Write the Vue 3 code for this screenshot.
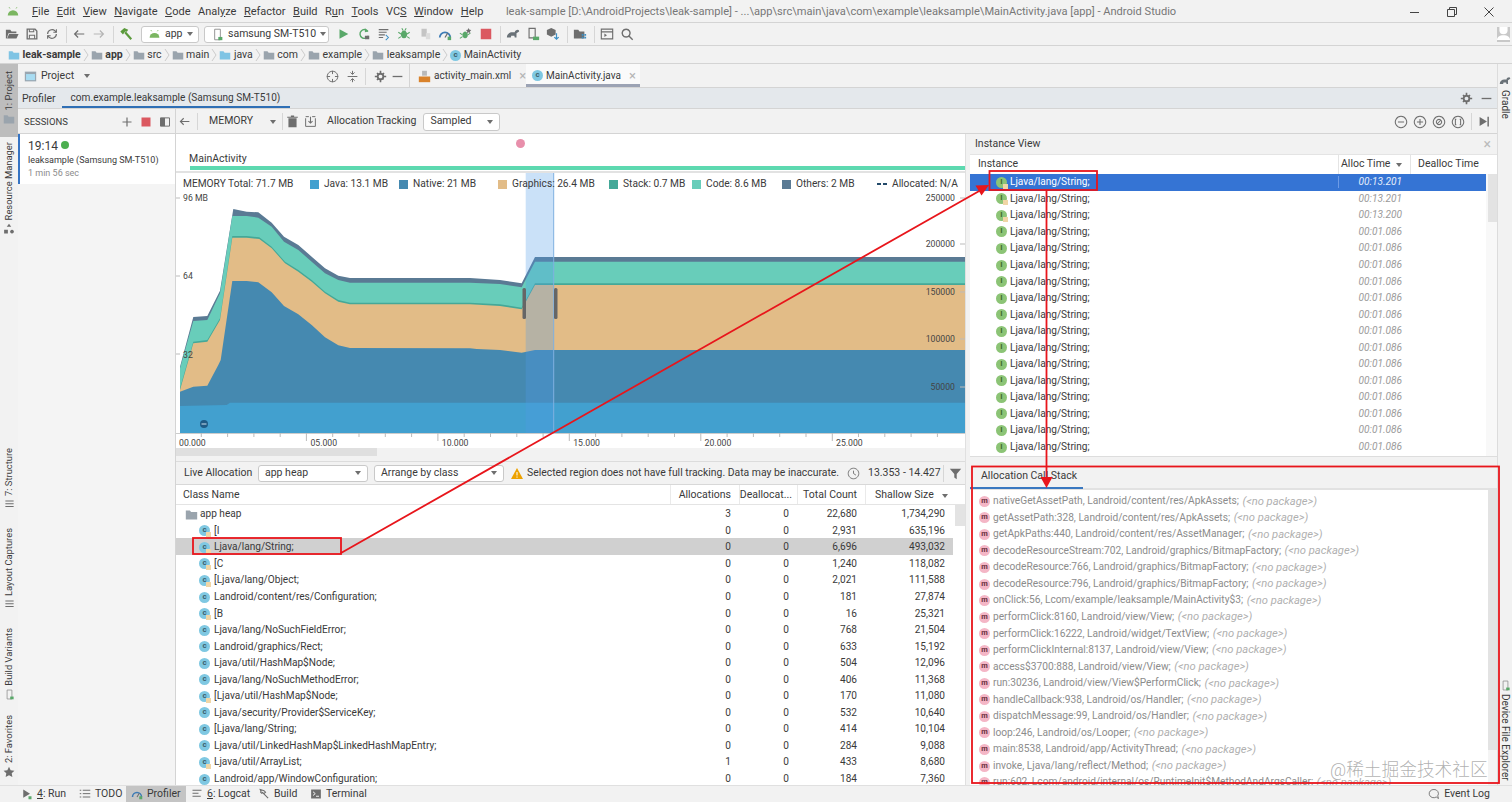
<template>
  <div class="ide">
    <!-- menu -->
    <div class="menu-bar">
      <Icon name="android" class="logo" />
      <span v-for="m in menus" :key="m.t" class="menu-item">{{ m.a }}<u>{{ m.u }}</u>{{ m.b }}</span>
      <span class="title">leak-sample [D:\AndroidProjects\leak-sample] - ...\app\src\main\java\com\example\leaksample\MainActivity.java [app] - Android Studio</span>
      <div class="win-btns">
        <svg width="12" height="12" viewBox="0 0 12 12"><path d="M1 6.5h9" stroke="#444" fill="none" /></svg>
        <svg width="12" height="12" viewBox="0 0 12 12"><path d="M1.5 3.5h7v7h-7zM3.5 3.5v-2h7v7h-2" stroke="#444" fill="none" /></svg>
        <svg width="12" height="12" viewBox="0 0 12 12"><path d="M1.5 1.5l9 9M10.5 1.5l-9 9" stroke="#444" fill="none" /></svg>
      </div>
    </div>

    <!-- toolbar -->
    <div class="tool-bar">
      <div v-for="n in ['folderOpen', 'save', 'sync']" :key="n" class="tb"><Icon :name="n" /></div>
      <i class="sep"></i>
      <div class="tb"><Icon name="back" /></div>
      <div class="tb"><Icon name="forward" /></div>
      <i class="sep"></i>
      <div class="tb"><Icon name="hammer" /></div>
      <div class="combo app-combo"><Icon name="android" :size="13" />app<b class="caret"></b></div>
      <div class="combo device-combo"><Icon name="device" :size="13" />samsung SM-T510<b class="caret"></b></div>
      <div v-for="n in runIcons" :key="n" class="tb run"><Icon :name="n" /></div>
      <i class="sep"></i>
      <div v-for="n in ['gradle', 'deviceSync', 'box']" :key="n" class="tb"><Icon :name="n" /></div>
      <i class="sep"></i>
      <div class="tb"><Icon name="folderGrid" /></div>
      <i class="sep"></i>
      <div class="tb"><Icon name="terminal" /></div>
      <div class="tb"><Icon name="search" /></div>
      <div class="avatar"><Icon name="user" :size="13" /></div>
    </div>

    <!-- breadcrumbs -->
    <div class="crumbs">
      <template v-for="(c, i) in crumbs" :key="c.t">
        <span class="crumb" :class="{ bold: c.bold }">
          <span v-if="c.cls" class="badge cls">c</span>
          <Icon v-else :name="c.blue ? 'folderBlue' : 'folder'" :size="12" />
          {{ c.t }}
        </span>
        <svg v-if="i < crumbs.length - 1" class="chev" width="6" height="14" viewBox="0 0 6 14"><path d="M1 1l4 6-4 6" fill="none" stroke="#ccc" /></svg>
      </template>
    </div>

    <div class="workspace">
      <!-- left stripe -->
      <div class="stripe left-stripe">
        <div class="stripe-btn active project-btn"><span>1: Project</span><Icon name="folder" :size="12" /></div>
        <div class="stripe-btn res-btn"><span>Resource Manager</span><Icon name="shapes" :size="12" /></div>
        <div class="stripe-btn structure-btn"><span>7: Structure</span><Icon name="list" :size="11" /></div>
        <div class="stripe-btn captures-btn"><span>Layout Captures</span><Icon name="list" :size="11" /></div>
        <div class="stripe-btn variants-btn"><span>Build Variants</span><Icon name="device" :size="11" /></div>
        <div class="stripe-btn fav-btn"><span>2: Favorites</span><Icon name="star" :size="12" /></div>
      </div>

      <div class="center">
        <!-- project + editor tabs -->
        <div class="tabs-row">
          <div class="project-head">
            <Icon name="window" :size="13" />
            <span>Project</span><b class="caret"></b>
            <span class="grow"></span>
            <Icon name="target" :size="13" />
            <Icon name="collapse" :size="13" class="collapse-ic" />
            <i class="sep"></i>
            <Icon name="gear" :size="13" />
            <Icon name="minus" :size="13" />
          </div>
          <div class="editor-tab">
            <Icon name="xml" :size="13" />
            <span>activity_main.xml</span><em>×</em>
          </div>
          <div class="editor-tab current">
            <span class="badge cls">c</span>
            <span>MainActivity.java</span><em>×</em>
          </div>
        </div>

        <!-- profiler tabs -->
        <div class="profiler-tabs">
          <span class="pt-label">Profiler</span>
          <span class="pt-tab">com.example.leaksample (Samsung SM-T510)</span>
          <span class="grow"></span>
          <Icon name="gear" :size="13" />
          <Icon name="minus" :size="13" />
        </div>

        <!-- profiler toolbar -->
        <div class="profiler-bar">
          <div class="sessions-head">
            <span class="sessions-label">SESSIONS</span>
            <span class="grow"></span>
            <Icon name="plus" :size="12" />
            <Icon name="stop" :size="12" />
            <Icon name="panel" :size="12" />
          </div>
          <div class="memory-bar">
            <Icon name="back" :size="13" />
            <i class="sep"></i>
            <span class="memory-label">MEMORY</span><b class="caret"></b>
            <i class="sep"></i>
            <Icon name="trash" :size="13" class="trash-ic" />
            <Icon name="capture" :size="13" />
            <span class="track-label">Allocation Tracking</span>
            <div class="combo sampled">Sampled<b class="caret"></b></div>
            <span class="grow"></span>
            <Icon name="zoomOut" :size="14" />
            <Icon name="zoomIn" :size="14" />
            <Icon name="zoomReset" :size="14" />
            <Icon name="zoomFit" :size="14" />
            <i class="sep"></i>
            <Icon name="toEnd" :size="13" />
          </div>
        </div>

        <div class="profiler-body">
          <!-- sessions -->
          <div class="sessions">
            <div class="session-card">
              <div class="session-time">19:14 <i class="live-dot"></i></div>
              <div>leaksample (Samsung SM-T510)</div>
              <div class="session-dur">1 min 56 sec</div>
            </div>
          </div>

          <!-- timeline + class table -->
          <div class="left-panel">
            <div class="event-strip">
              <i class="event-dot"></i>
              <span class="activity-name">MainActivity</span>
              <i class="activity-bar"></i>
            </div>
            <div class="chart">
              <svg class="chart-svg" width="790" height="275" viewBox="176 173 790 275">
                <path v-for="a in areas" :key="a.c" :d="a.d" :fill="a.c" />
                <rect x="525.7" y="173" width="28" height="260" fill="#4f9be8" fill-opacity=".3" />
                <path d="M553.7 173v260" stroke="#7fb0e0" />
                <rect x="522.5" y="288" width="3.5" height="31" rx="1.5" fill="#666" />
                <rect x="554" y="288" width="3.5" height="31" rx="1.5" fill="#666" />
                <circle cx="204" cy="424" r="4" fill="#1f5b85" />
                <path d="M201.5 424h5" stroke="#cfe3f0" />
                <path d="M176 433.5h789" stroke="#ccc" />
                <path v-for="t in ticks" :key="t.x" :d="`M${t.x} 433v${t.h}`" stroke="#bbb" />
                <text v-for="l in timeLabels" :key="l.t" :x="l.x" y="446" class="axis">{{ l.t }}</text>
                <text x="183" y="201" class="axis">96 MB</text>
                <text x="183" y="279" class="axis">64</text>
                <text x="183" y="358" class="axis">32</text>
                <path d="M176 198h4M176 276h4M176 354h4" stroke="#bbb" />
                <template v-for="r in rightAxis" :key="r.t">
                  <text x="955" :y="r.y + 3" class="axis end">{{ r.t }}</text>
                  <path :d="`M960 ${r.y}h5`" stroke="#bbb" />
                </template>
              </svg>
              <div class="legend">
                <span class="legend-total">MEMORY Total: 71.7 MB</span>
                <span v-for="l in legend" :key="l.t" class="legend-item" :style="{ width: l.w + 'px' }">
                  <i class="swatch" :style="{ background: l.c }"></i>{{ l.t }}
                </span>
                <span class="legend-item"><i class="dash"></i>Allocated: N/A</span>
              </div>
            </div>
            <div class="h-scroll"><i></i></div>

            <div class="alloc-bar">
              <span class="live-label">Live Allocation</span>
              <div class="combo heap">app heap<b class="caret"></b></div>
              <div class="combo arrange">Arrange by class<b class="caret"></b></div>
              <svg class="warn" width="12" height="11" viewBox="0 0 12 11"><path d="M6 0l6 11H0z" fill="#EDA200" /><path d="M6 4v3.5M6 8.5v1.2" stroke="#fff" /></svg>
              <span class="warn-text">Selected region does not have full tracking. Data may be inaccurate.</span>
              <Icon name="clock" :size="13" />
              <span class="range">13.353 - 14.427</span>
              <i class="sep"></i>
              <Icon name="filter" :size="13" />
            </div>

            <div class="alloc-head">
              <span class="col-name">Class Name</span>
              <span class="num">Allocations</span>
              <span class="num dealloc">Deallocat...</span>
              <span class="num">Total Count</span>
              <span class="num sorted">Shallow Size<b class="caret"></b></span>
            </div>
            <div class="alloc-wrap">
              <div class="alloc-rows">
                <div v-for="(r, i) in classes" :key="i" class="alloc-row" :class="{ picked: i === 2 }">
                  <span class="class-cell" :class="{ root: i === 0 }">
                    <Icon v-if="i === 0" name="folder" :size="13" />
                    <span v-else class="badge cls">c<i v-if="r[5]" class="lock"></i></span>
                    {{ r[0] }}
                  </span>
                  <span class="val">{{ r[1] }}</span>
                  <span class="val">{{ r[2] }}</span>
                  <span class="val">{{ r[3] }}</span>
                  <span class="val">{{ r[4] }}</span>
                </div>
              </div>
              <div class="v-track"><i class="thumb-a"></i></div>
            </div>
          </div>

          <!-- instance view + call stack -->
          <div class="right-panel">
            <div class="instance-title"><span>Instance View</span><em>×</em></div>
            <div class="instance-head">
              <span>Instance</span>
              <span class="it-col">Alloc Time<b class="caret"></b></span>
              <span class="it-col last">Dealloc Time</span>
            </div>
            <div class="instance-wrap">
              <div class="instance-rows">
                <div v-for="(t, i) in instanceTimes" :key="i" class="instance-row" :class="{ picked: i === 0 }">
                  <span class="inst-name">
                    <span class="badge inst">I<i v-if="i < 3" class="lock"></i></span>Ljava/lang/String;
                  </span>
                  <span class="inst-time">{{ t }}</span>
                  <span></span>
                </div>
              </div>
              <div class="v-track inst-track"><i class="thumb-b"></i></div>
            </div>
            <div class="pane-gap"></div>
            <div class="stack-tabs"><span>Allocation Call Stack</span></div>
            <div class="stack-wrap">
              <div class="stack-rows">
                <div v-for="s in stack" :key="s" class="stack-row">
                  <span class="badge mth">m</span>{{ s }} <em>(&lt;no package&gt;)</em>
                </div>
              </div>
              <div class="v-track stack-track"><i class="thumb-c"></i></div>
            </div>
          </div>
        </div>
      </div>

      <!-- right stripe -->
      <div class="stripe right-stripe">
        <div class="stripe-btn gradle-btn"><Icon name="gradle" :size="12" /><span>Gradle</span></div>
        <span class="grow"></span>
        <div class="stripe-btn files-btn"><Icon name="device" :size="11" /><span>Device File Explorer</span></div>
      </div>
    </div>

    <!-- status bar -->
    <div class="status-bar">
      <div v-for="b in bottomTabs" :key="b.t" class="bottom-tab" :class="{ active: b.active }" :style="{ width: b.w + 'px' }">
        <Icon :name="b.i" :size="12" /><span><u v-if="b.n">{{ b.n }}</u>{{ b.t }}</span>
      </div>
      <span class="grow"></span>
      <div class="bottom-tab event-log"><Icon name="bubble" :size="12" /><span>Event Log</span></div>
    </div>

    <!-- red annotations drawn on the screenshot -->
    <svg class="marks" width="1512" height="802" viewBox="0 0 1512 802">
      <rect x="193" y="538" width="148" height="16" />
      <rect x="989.5" y="171" width="107.5" height="19" />
      <rect x="972" y="466.5" width="527" height="316.5" />
      <path d="M341 553L981 190M1046.5 190V480" />
      <path class="head" d="M989 185L981.5 195.5L975.5 185.5z" />
      <path class="head" d="M1046.5 488L1040.5 477H1052.5z" />
    </svg>
    <div class="watermark">@稀土掘金技术社区</div>
  </div>
</template>

<script setup>
import { h } from 'vue'

const G = '#6E6E6E'
const GREEN = '#59A869'
const BLUE = '#3D8FC4'

// [path, colour, strokeWidth] - no stroke width means filled
const icons = {
  android: [['M2 12a6 6 0 0 1 12 0z', '#7BB661'], ['M4.5 4L3.5 2.5M11.5 4l1-1.5', '#7BB661', 1]],
  folderOpen: [['M1 3h5l1.5 2H13v2H4L2 13H1z', G], ['M4.7 8H15.5l-2.4 5H2.3z', G]],
  save: [['M2.5 2.5h9l2 2v9h-11z', G, 1.5], ['M5 2.5v3h5v-3M5 13.5V9.5h6v4', G, 1.2]],
  sync: [['M3 8a5 5 0 0 1 8.5-3.5L13 6M13 8a5 5 0 0 1-8.5 3.5L3 10', G, 1.4], ['M13 2.5V6H9.5M3 13.5V10h3.5', G, 1.2]],
  back: [['M14 8H3M7 4L3 8l4 4', G, 1.4]],
  forward: [['M2 8h11M9 4l4 4-4 4', '#B5B5B5', 1.4]],
  hammer: [['M1.500 5L6 1l4.500 2-1.500 2.500-2-.5L4.500 8.500z', '#5B9A3C'], ['M7 6l7 8', '#5B9A3C', 2.400]],
  device: [['M4.5 1.5h7v13h-7z', '#8a8a8a', 1.1], ['M9 11h5v4H9z', GREEN]],
  run: [['M4 2.5l10 5.5-10 5.5z', GREEN]],
  apply: [['M12.5 5a5 5 0 1 0 .5 5', GREEN, 1.6], ['M9 1l4 4-4 1z', GREEN], ['M9 10h5v4H9z', G]],
  lines: [['M2 3h11M2 6h9M2 9h7M2 12h5', G, 1.3], ['M10 9l3 3-3 3', BLUE, 1.2]],
  bug: [['M8 4a3.5 4.5 0 1 0 .01 0z', GREEN], ['M1.5 6l3 2M14.5 6l-3 2M1.5 13l3-2M14.5 13l-3-2M5.5 1.5L7 4M10.5 1.5L9 4', GREEN, 1.2]],
  attach: [['M4 2h6v9H4z', '#c4c4c4'], ['M9 7h5v7H9z', '#dcdcdc']],
  gauge: [['M2 12a6 6 0 0 1 12 0', '#3D7BB5', 2], ['M8 12l3-5', G, 1.4], ['M11 11h4v4h-4z', GREEN]],
  bug2: [['M7 5a3 4 0 1 0 .01 0z', GREEN], ['M1 7l3 2M13 7l-3 2M1 13l3-2', GREEN, 1.2], ['M11 1l1 2 2 .5-1.5 1.5.5 2-2-1-2 1 .5-2L8 3.5l2-.5z', G]],
  stop: [['M2 2h12v12H2z', '#DB5860']],
  gradle: [['M1 12c0-4 3-6 6-6h3c0-2 2-3 3.5-3 1 0 1.500 1 1.500 2l-3 2v5h-2l-.5-2H6l-.5 2H3z', '#6a7278']],
  deviceSync: [['M3.500 1.500h7v11h-7z', G, 1.300], ['M8 11h7v4H8z', GREEN]],
  box: [['M6 1l5 2.500v5L6 11 1 8.500v-5z', G], ['M12 7v7M9.500 11.500L12 14l2.500-2.500', BLUE, 1.400]],
  folderGrid: [['M1 3h5l1.500 2H13v8H1z', G], ['M10 8h2v2h-2zM13 8h2v2h-2zM10 11h2v2h-2zM13 11h2v2h-2z', BLUE]],
  terminal: [['M1.500 2.500h13v11h-13zM1.500 5.500h13', G, 1.300], ['M5 7.500l3 2-3 2z', G]],
  search: [['M7 2.500a4.500 4.500 0 1 0 .01 0zM10.500 10.500l4 4', G, 1.600]],
  user: [['M3 0h10v4a5 5 0 0 1-10 0z', '#fff'], ['M0 16c0-4 3-6 8-6s8 2 8 6z', '#fff']],
  folder: [['M1 3h5l1.500 2H15v9H1z', '#9aa4ad']],
  folderBlue: [['M1 3h5l1.500 2H15v9H1z', '#7fc4e4']],
  shapes: [['M8 1l3 4H5zM1.500 9h5v5h-5z', G], ['M12 9a2.500 2.500 0 1 0 .01 0z', G]],
  list: [['M2 3h12M2 7h12M2 11h12', G, 1.500]],
  star: [['M8 1l2.200 4.600 5 .7-3.600 3.500.9 5L8 12.400 3.500 14.800l.9-5L.8 6.300l5-.7z', G]],
  window: [['M1 2h14v12H1z', '#9aa6b0'], ['M2.500 5h11v7.500h-11z', '#a8dcf2']],
  target: [['M8 1.500a6.500 6.500 0 1 0 .01 0zM8 1v4M8 11v4M1 8h4M11 8h4', G, 1.200]],
  collapse: [['M2 8h12M8 1v4M5.500 3L8 5.500 10.500 3M8 15v-4M5.500 13L8 10.500l2.500 2.500', G, 1.200]],
  gear: [['M8 4.500a3.500 3.500 0 1 0 .01 0z', G, 2.400], ['M7 1h2v3H7zM7 12h2v3H7zM1 7h3v2H1zM12 7h3v2h-3zM3 4.400L4.400 3l2 2L5 6.400zM11 9.600L12.400 11 11 12.400l-1.400-2zM3 11.600L5 9.600 6.400 11l-2 2zM9.600 5l2-2L13 4.400l-2 2z', G]],
  minus: [['M2 8h12', G, 1.600]],
  xml: [['M5 1h6v6H5z', '#b9b9b9'], ['M1 8h14v7H1z', '#D9822B']],
  plus: [['M8 2v12M2 8h12', G, 1.600]],
  panel: [['M2 2.500h12v11H2z', G, 1.300], ['M2 2.500h6v11H2z', G]],
  trash: [['M3 4h10v11H3zM1.500 2h13v1.500h-13zM6 .5h4V2H6z', G]],
  capture: [['M2 4v10h12V4M6 2H2M14 2h-4', G, 1.200], ['M8 2v8M5.500 7.500L8 10l2.500-2.500', G, 1.300]],
  zoomOut: [['M8 1.500a6.500 6.500 0 1 0 .01 0zM4.500 8h7', G, 1.200]],
  zoomIn: [['M8 1.500a6.500 6.500 0 1 0 .01 0zM4.500 8h7M8 4.500v7', G, 1.200]],
  zoomReset: [['M8 1.500a6.500 6.500 0 1 0 .01 0zM8 5a3 3 0 1 0 .01 0zM6 10l4-4', G, 1.200]],
  zoomFit: [['M8 1.500a6.500 6.500 0 1 0 .01 0zM6 5H5v6h1M10 5h1v6h-1', G, 1.200]],
  toEnd: [['M2 2.500l9 5.500-9 5.500z', G], ['M12.500 2v12', G, 1.800]],
  clock: [['M8 1.500a6.500 6.500 0 1 0 .01 0zM8 4.500V8l3 2', G, 1.100]],
  filter: [['M1 2h14L9.500 8.500V15l-3-2V8.500z', G]],
  runBtn: [['M3 2l9 5.500L3 13z', G], ['M10 11h4v4h-4z', GREEN]],
  todo: [['M1 3h2M1 7.500h2M1 12h2M5 3h10M5 7.500h10M5 12h10', G, 1.300]],
  logcat: [['M2 3h12M2 7h8M2 11h11', G, 1.500]],
  tool: [['M3 2l5 1.500 2 2-2 2-2-1.500-1 1-1.500-1.500.5-1zM6.500 6.500l7 7', G, 1.500]],
  term: [['M1.500 2h13v12h-13z', G], ['M4 5l3 2.500L4 10M8 11h4', '#fff', 1.200]],
  bubble: [['M8 2a6 5.500 0 1 0 3 10l3 2-1-3.500A5.500 5.500 0 0 0 8 2z', G, 1.200]]
}

const Icon = (props) => h('svg', {
  class: 'ic',
  width: props.size || 14,
  height: props.size || 14,
  viewBox: '0 0 16 16'
}, icons[props.name].map(([d, c, w]) => h('path', w ? { d, fill: 'none', stroke: c, 'stroke-width': w } : { d, fill: c })))
Icon.props = ['name', 'size']

const menus = [
  { t: 'File', a: '', u: 'F', b: 'ile' }, { t: 'Edit', a: '', u: 'E', b: 'dit' },
  { t: 'View', a: '', u: 'V', b: 'iew' }, { t: 'Navigate', a: '', u: 'N', b: 'avigate' },
  { t: 'Code', a: '', u: 'C', b: 'ode' }, { t: 'Analyze', a: 'Anal', u: 'y', b: 'ze' },
  { t: 'Refactor', a: '', u: 'R', b: 'efactor' }, { t: 'Build', a: '', u: 'B', b: 'uild' },
  { t: 'Run', a: 'R', u: 'u', b: 'n' }, { t: 'Tools', a: '', u: 'T', b: 'ools' },
  { t: 'VCS', a: 'VC', u: 'S', b: '' }, { t: 'Window', a: '', u: 'W', b: 'indow' },
  { t: 'Help', a: '', u: 'H', b: 'elp' }
]
const runIcons = ['run', 'apply', 'lines', 'bug', 'attach', 'gauge', 'bug2', 'stop']

const crumbs = [
  { t: 'leak-sample', bold: true, blue: true }, { t: 'app', bold: true }, { t: 'src' }, { t: 'main' },
  { t: 'java', blue: true }, { t: 'com' }, { t: 'example' }, { t: 'leaksample' }, { t: 'MainActivity', cls: true }
]

const bottomTabs = [
  { t: ': Run', n: '4', i: 'runBtn', w: 58 }, { t: 'TODO', i: 'todo', w: 52 },
  { t: 'Profiler', i: 'gauge', active: true, w: 60 }, { t: ': Logcat', n: '6', i: 'logcat', w: 67 },
  { t: 'Build', i: 'tool', w: 52 }, { t: 'Terminal', i: 'term', w: 70 }
]

// chart series, traced in 3x coordinates of the x=170 y=130 crop
const END = 2385
const others = [[30, 710], [70, 561], [112, 558], [150, 482], [190, 237], [230, 245], [265, 247], [305, 278], [342, 320], [385, 345], [425, 380], [465, 415], [505, 437], [540, 444], [900, 444], [990, 450], [1055, 460], [1095, 381], [END, 381]]
const code = [[30, 715], [70, 573], [112, 570], [150, 490], [187, 258], [230, 258], [265, 263], [305, 290], [342, 335], [385, 360], [425, 395], [465, 430], [505, 450], [540, 458], [900, 458], [990, 462], [1055, 472], [1095, 395], [END, 395]]
const graphics = [[30, 780], [70, 640], [112, 635], [150, 570], [187, 323], [230, 323], [268, 327], [305, 355], [345, 400], [385, 425], [425, 455], [465, 490], [505, 515], [540, 523], [900, 523], [990, 528], [1055, 538], [1095, 465], [END, 465]]
const stackTop = graphics.map(([x, y]) => [x, y - 5])
const native = [[30, 785], [70, 770], [112, 767], [145, 705], [152, 690], [187, 453], [230, 453], [265, 457], [305, 487], [342, 528], [385, 553], [425, 585], [465, 622], [505, 646], [540, 654], [900, 655], [920, 657], [990, 660], [1055, 668], [1095, 660], [END, 660]]
const java = [[30, 828], [170, 825], [180, 818], [END, 818]]

const toArea = (pts) => {
  const line = pts.map(([x, y]) => `${(170 + x / 3).toFixed(1)} ${(130 + y / 3).toFixed(1)}`).join('L')
  return `M180 433L${line}L965 433z`
}
const areas = [
  { c: '#5A7A94', d: toArea(others) },
  { c: '#68CDBA', d: toArea(code) },
  { c: '#44A898', d: toArea(stackTop) },
  { c: '#E2BC87', d: toArea(graphics) },
  { c: '#4589B0', d: toArea(native) },
  { c: '#42A0CF', d: toArea(java) }
]

const ticks = Array.from({ length: 30 }, (_, i) => ({
  x: +(175 + 26.29 * i).toFixed(1),
  h: i % 5 === 0 ? 8 : 4
})).filter((t) => t.x > 178 && t.x < 965)
const timeLabels = ['00.000', '05.000', '10.000', '15.000', '20.000', '25.000'].map((t, i) => ({ t, x: 179 + 131.4 * i }))
const rightAxis = [
  { t: '250000', y: 198 }, { t: '200000', y: 244 }, { t: '150000', y: 292 },
  { t: '100000', y: 339 }, { t: '50000', y: 387 }
]
const legend = [
  { t: 'Java: 13.1 MB', c: '#42A0CF', w: 89 }, { t: 'Native: 21 MB', c: '#4589B0', w: 99 },
  { t: 'Graphics: 26.4 MB', c: '#E2BC87', w: 111 }, { t: 'Stack: 0.7 MB', c: '#44A898', w: 83 },
  { t: 'Code: 8.6 MB', c: '#68CDBA', w: 90 }, { t: 'Others: 2 MB', c: '#5A7A94', w: 95 }
]

const classes = [
  ['app heap', '3', '0', '22,680', '1,734,290'],
  ['[I', '0', '0', '2,931', '635,196', 1],
  ['Ljava/lang/String;', '0', '0', '6,696', '493,032', 1],
  ['[C', '0', '0', '1,240', '118,082', 1],
  ['[Ljava/lang/Object;', '0', '0', '2,021', '111,588', 1],
  ['Landroid/content/res/Configuration;', '0', '0', '181', '27,874'],
  ['[B', '0', '0', '16', '25,321', 1],
  ['Ljava/lang/NoSuchFieldError;', '0', '0', '768', '21,504'],
  ['Landroid/graphics/Rect;', '0', '0', '633', '15,192'],
  ['Ljava/util/HashMap$Node;', '0', '0', '504', '12,096'],
  ['Ljava/lang/NoSuchMethodError;', '0', '0', '406', '11,368'],
  ['[Ljava/util/HashMap$Node;', '0', '0', '170', '11,080', 1],
  ['Ljava/security/Provider$ServiceKey;', '0', '0', '532', '10,640'],
  ['[Ljava/lang/String;', '0', '0', '414', '10,104'],
  ['Ljava/util/LinkedHashMap$LinkedHashMapEntry;', '0', '0', '284', '9,088'],
  ['Ljava/util/ArrayList;', '1', '0', '433', '8,680', 1],
  ['Landroid/app/WindowConfiguration;', '0', '0', '184', '7,360']
]

const instanceTimes = ['00:13.201', '00:13.201', '00:13.200', ...Array(14).fill('00:01.086')]

const stack = [
  'nativeGetAssetPath, Landroid/content/res/ApkAssets;',
  'getAssetPath:328, Landroid/content/res/ApkAssets;',
  'getApkPaths:440, Landroid/content/res/AssetManager;',
  'decodeResourceStream:702, Landroid/graphics/BitmapFactory;',
  'decodeResource:766, Landroid/graphics/BitmapFactory;',
  'decodeResource:796, Landroid/graphics/BitmapFactory;',
  'onClick:56, Lcom/example/leaksample/MainActivity$3;',
  'performClick:8160, Landroid/view/View;',
  'performClick:16222, Landroid/widget/TextView;',
  'performClickInternal:8137, Landroid/view/View;',
  'access$3700:888, Landroid/view/View;',
  'run:30236, Landroid/view/View$PerformClick;',
  'handleCallback:938, Landroid/os/Handler;',
  'dispatchMessage:99, Landroid/os/Handler;',
  'loop:246, Landroid/os/Looper;',
  'main:8538, Landroid/app/ActivityThread;',
  'invoke, Ljava/lang/reflect/Method;',
  'run:602, Lcom/android/internal/os/RuntimeInit$MethodAndArgsCaller;'
]
</script>

<style scoped>
.ide {
  position: relative;
  width: 1512px;
  height: 802px;
  overflow: hidden;
  display: flex;
  flex-direction: column;
  background: #f2f2f2;
  color: #3a3a3a;
  font: 10.5px/1.2 Roboto, "Noto Sans CJK SC", sans-serif;
}
.ic { display: block; flex: none; }
.grow { flex: 1; }
em { font-style: normal; }
.sep {
  display: block;
  flex: none;
  width: 1px;
  height: 17px;
  margin: 0 6px;
  background: #d6d6d6;
}

.menu-bar {
  flex: none;
  height: 23px;
  display: flex;
  align-items: center;
  border-bottom: 1px solid #d4d4d4;
  box-sizing: border-box;
  padding: 1px 0 0 6px;
}
.logo { margin-right: 12px; }
.menu-item { margin-right: 7.5px; font-size: 11px; }
.title { margin-left: 15px; color: #777; font-size: 11.1px; white-space: nowrap; }
.win-btns {
  margin-left: auto;
  display: flex;
  gap: 25px;
  padding-right: 17px;
}

.tool-bar {
  flex: none;
  height: 23px;
  display: flex;
  align-items: center;
  border-bottom: 1px solid #d4d4d4;
  box-sizing: border-box;
  padding-left: 2px;
}
.tool-bar .sep { margin: 0 2px 0 4px; }
.tb { width: 20px; display: flex; justify-content: center; flex: none; }
.tb.run { width: 20.4px; }
.combo {
  flex: none;
  box-sizing: border-box;
  height: 17px;
  display: flex;
  align-items: center;
  gap: 4px;
  padding: 0 6px;
  background: #fff;
  border: 1px solid #c9c9c9;
  border-radius: 3px;
  font-size: 10.5px;
  white-space: nowrap;
}
.caret {
  flex: none;
  width: 0;
  height: 0;
  margin-left: auto;
  border: 3.5px solid transparent;
  border-top: 4px solid #6e6e6e;
  border-bottom: 0;
}
.app-combo { width: 58px; margin: 0 5px 0 5px; }
.device-combo { width: 125px; margin-right: 4px; }
.avatar {
  margin-left: auto;
  margin-right: 2px;
  width: 13px;
  height: 15px;
  background: #c8c8c8;
}

.crumbs {
  flex: none;
  height: 18px;
  display: flex;
  align-items: center;
  gap: 2px;
  padding: 1px 0 0 8px;
  border-bottom: 1px solid #d4d4d4;
  box-sizing: border-box;
}
.crumb { display: flex; align-items: center; gap: 2.5px; }
.crumb.bold { font-weight: 700; }
.chev { flex: none; }

.badge {
  position: relative;
  flex: none;
  display: inline-block;
  box-sizing: border-box;
  width: 11px;
  height: 11px;
  border-radius: 50%;
  text-align: center;
  font-size: 8px;
  line-height: 10px;
  font-weight: 700;
  color: #3c5f6c;
}
.badge.cls { background: #7fc8e2; }
.badge.inst { background: #8cc476; color: #3f6a2c; }
.badge.mth { background: #f4b6c6; color: #6a2f3c; margin-right: 3px; font-size: 7.5px; }
.lock {
  position: absolute;
  right: -1px;
  bottom: -1px;
  width: 5px;
  height: 5px;
  background: #f0d6a6;
}

.workspace { flex: 1; min-height: 0; display: flex; }
.stripe { flex: none; display: flex; flex-direction: column; overflow: hidden; }
.left-stripe { width: 18px; font-size: 9.4px; }
.right-stripe { width: 15px; border-left: 1px solid #dcdcdc; box-sizing: border-box; padding-top: 11px; font-size: 10px; }
.stripe-btn {
  display: flex;
  flex-direction: column;
  align-items: center;
  flex: none;
  gap: 3px;
}
.left-stripe .stripe-btn span { writing-mode: vertical-rl; transform: rotate(180deg); }
.right-stripe .stripe-btn span { writing-mode: vertical-rl; }
.stripe-btn.active { background: #bdbdbd; }
.project-btn { height: 73px; padding-top: 7px; box-sizing: border-box; }
.res-btn { margin-top: 5px; }
.structure-btn { margin-top: 213px; }
.captures-btn { margin-top: 18px; }
.variants-btn { margin-top: 18px; }
.fav-btn { margin-top: 15px; }
.files-btn { margin-bottom: 4px; }
.gradle-btn { margin-bottom: 4px; }

.center { flex: none; width: 1479px; display: flex; flex-direction: column; min-height: 0; }

.tabs-row {
  flex: none;
  height: 24px;
  display: flex;
  align-items: center;
  border-bottom: 1px solid #d4d4d4;
  box-sizing: border-box;
}
.project-head {
  flex: none;
  width: 392px;
  height: 100%;
  box-sizing: border-box;
  padding: 1px 5px 0 6px;
  display: flex;
  align-items: center;
  gap: 4px;
  border-right: 1px solid #d4d4d4;
}
.project-head .caret { margin-left: 6px; }
.collapse-ic { margin-left: 3px; }
.project-head .sep { margin: 0 4px 0 2px; }
.editor-tab {
  flex: none;
  width: 116px;
  height: 100%;
  box-sizing: border-box;
  display: flex;
  align-items: center;
  gap: 3px;
  padding: 1px 0 0 8px;
  font-size: 10px;
}
.editor-tab em { margin-left: 5px; color: #b5b5b5; font-size: 13px; }
.editor-tab.current {
  width: 114px;
  background: #fafafa;
  border-bottom: 3px solid #9ca3b4;
  padding: 3px 0 0 6px;
}

.profiler-tabs {
  flex: none;
  height: 21px;
  display: flex;
  align-items: center;
  background: #e4e8ec;
  border-bottom: 1px solid #d4d4d4;
  box-sizing: border-box;
  padding-right: 4px;
  gap: 7px;
}
.pt-label { margin: 2px 0 0 4px; }
.pt-tab {
  align-self: stretch;
  display: flex;
  align-items: center;
  margin-left: -1px;
  padding: 2px 10px 0 9px;
  border-bottom: 2px solid #2f6fb5;
  font-size: 10.1px;
}

.profiler-bar {
  flex: none;
  height: 25px;
  display: flex;
  border-bottom: 1px solid #d4d4d4;
  box-sizing: border-box;
}
.sessions-head {
  width: 158px;
  box-sizing: border-box;
  display: flex;
  align-items: center;
  gap: 7px;
  padding: 1px 4px 0 6px;
  border-right: 1px solid #d4d4d4;
}
.sessions-label { font-size: 9.5px; }
.memory-bar {
  flex: 1;
  display: flex;
  align-items: center;
  padding: 1px 6px 0 2px;
  gap: 5px;
}
.memory-bar .sep { margin: 0 1px; }
.memory-label { margin: 0 12px 0 5px; }
.memory-bar .caret { margin: 0; }
.trash-ic { margin-left: -3px; }
.track-label { margin-left: 5px; }
.sampled { width: 77px; height: 18px; margin-left: 2px; }
.sampled .caret { margin-left: auto !important; }

.profiler-body { flex: 1; min-height: 0; display: flex; background: #fff; }
.sessions {
  flex: none;
  width: 158px;
  box-sizing: border-box;
  border-right: 1px solid #d4d4d4;
  background: #f4f4f4;
}
.session-card {
  height: 50px;
  box-sizing: border-box;
  border-left: 2px solid #3574c4;
  padding: 4px 0 0 8px;
  background: #fff;
  font-size: 9px;
  line-height: 13px;
}
.session-time { display: flex; align-items: center; gap: 3px; font-size: 12px; line-height: 16px; }
.live-dot { width: 8px; height: 8px; border-radius: 50%; background: #4caf50; margin-top: -3px; }
.session-dur { color: #8c8c8c; }

.left-panel { flex: none; width: 789px; min-height: 0; display: flex; flex-direction: column; }
.event-strip {
  position: relative;
  flex: none;
  height: 39px;
  border-bottom: 2px solid #e2e2e2;
  box-sizing: border-box;
}
.event-dot {
  position: absolute;
  left: 340px;
  top: 5px;
  width: 9px;
  height: 9px;
  border-radius: 50%;
  background: #e88fab;
}
.activity-name { position: absolute; left: 13px; top: 19px; }
.activity-bar {
  position: absolute;
  left: 14px;
  right: 0;
  top: 32px;
  height: 3.5px;
  background: #5dd9b0;
}
.chart { position: relative; flex: none; height: 275px; overflow: hidden; }
.chart-svg { position: absolute; left: 0; top: 0; }
.axis { font-size: 8.7px; fill: #444; }
.axis.end { text-anchor: end; }
.legend {
  position: relative;
  display: flex;
  align-items: center;
  padding: 5px 0 0 7px;
  white-space: nowrap;
  font-size: 10.2px;
}
.legend-total { width: 127px; flex: none; }
.legend-item { display: flex; align-items: center; flex: none; gap: 5px; }
.swatch { flex: none; width: 9px; height: 9px; }
.dash {
  width: 10px;
  height: 2px;
  background: repeating-linear-gradient(90deg, #234a6a 0 4px, transparent 4px 6px);
}

.h-scroll {
  flex: none;
  height: 14px;
  background: #f2f2f2;
  border-bottom: 1px solid #dcdcdc;
  box-sizing: border-box;
}
.h-scroll i { display: block; width: 201px; height: 8px; background: #dfdfdf; }

.alloc-bar {
  flex: none;
  height: 23px;
  display: flex;
  align-items: center;
  gap: 4px;
  padding-left: 8px;
  background: #f2f2f2;
  border-bottom: 1px solid #d8d8d8;
  box-sizing: border-box;
  white-space: nowrap;
}
.live-label { width: 70px; flex: none; }
.heap { width: 110px; }
.arrange { width: 130px; margin-left: 2px; }
.warn { margin-left: 3px; flex: none; }
.warn-text { width: 316px; flex: none; font-size: 10.4px; }
.range { margin-left: 4px; width: 71px; flex: none; }
.alloc-bar .sep { margin: 0 1px 0 0; }

.alloc-head {
  flex: none;
  height: 20px;
  display: grid;
  grid-template-columns: 494px 69px 58px 68px 100px;
  align-items: center;
  border-bottom: 1px solid #e4e4e4;
  box-sizing: border-box;
}
.col-name { padding: 2px 0 0 7px; }
.num {
  height: 100%;
  display: flex;
  align-items: center;
  justify-content: flex-end;
  padding: 2px 8px 0 0;
  border-left: 1px solid #eaeaea;
  box-sizing: border-box;
}
.num.dealloc { padding-right: 5px; }
.num.sorted { justify-content: flex-start; padding-left: 9px; gap: 8px; }
.num.sorted .caret { margin-left: 0; }

.alloc-wrap { flex: 1; min-height: 0; display: flex; overflow: hidden; }
.alloc-rows { width: 777px; flex: none; }
.alloc-row {
  height: 16.56px;
  display: grid;
  grid-template-columns: 494px 69px 58px 68px 88px;
  align-items: center;
  font-size: 10.1px;
  line-height: 14px;
  padding-top: 0;
}
.alloc-row > span { position: relative; top: 1px; }
.alloc-row.picked { background: #d0d0d0; }
.class-cell { display: flex; align-items: center; gap: 4px; padding-left: 23px; }
.class-cell.root { padding-left: 9px; gap: 2px; }
.val { text-align: right; padding-right: 8px; }
.v-track { flex: none; width: 12px; }
.thumb-a { display: block; width: 10px; height: 21px; margin-left: 2px; background: #e3e3e3; }

.right-panel {
  flex: none;
  width: 527px;
  margin-left: 5px;
  min-height: 0;
  display: flex;
  flex-direction: column;
  position: relative;
}
.right-panel::before {
  content: "";
  position: absolute;
  left: -5px;
  top: 0;
  bottom: 0;
  width: 5px;
  background: #f2f2f2;
  border-left: 1px solid #e0e0e0;
  box-sizing: border-box;
}
.instance-title {
  flex: none;
  height: 21px;
  display: flex;
  align-items: center;
  justify-content: space-between;
  padding: 1px 6px 0 5px;
  background: #f2f2f2;
  border-bottom: 1px solid #e4e4e4;
  box-sizing: border-box;
}
.instance-title em { color: #bbb; font-size: 14px; }
.instance-head {
  flex: none;
  height: 19px;
  display: grid;
  grid-template-columns: 368px 72px 87px;
  align-items: center;
  padding-left: 0;
}
.instance-head > span:first-child { padding-left: 8px; }
.it-col {
  height: 100%;
  display: flex;
  align-items: center;
  gap: 3px;
  padding-left: 2px;
  border-left: 1px solid #e4e4e4;
  box-sizing: border-box;
}
.it-col .caret { margin: 0 8px 0 auto; }
.it-col.last { padding-left: 7px; }
.instance-wrap { flex: none; height: 283px; display: flex; overflow: hidden; border-bottom: 1px solid #ddd; box-sizing: border-box; }
.instance-rows { width: 516px; flex: none; }
.instance-row {
  height: 16.56px;
  display: grid;
  grid-template-columns: 368px 72px 76px;
  align-items: center;
  font-size: 10.1px;
}
.instance-row.picked { background: #3574d4; color: #fff; }
.inst-name { display: flex; align-items: center; gap: 3px; padding-left: 26px; }
.inst-time { text-align: right; padding-right: 8px; font-style: italic; color: #9a9a9a; border-left: 1px solid transparent; }
.picked .inst-time { color: #e6eefb; border-left-color: #6d9be6; }
.inst-track { width: 11px; background: #f8f8f8; }
.thumb-b { display: block; width: 9px; height: 48px; margin-left: 2px; background: #e3e3e3; }
.pane-gap { flex: none; height: 9px; background: #f2f2f2; }
.stack-tabs {
  flex: none;
  height: 24px;
  background: #f2f2f2;
  display: flex;
  border-bottom: 2px solid #e2e2e2;
  box-sizing: border-box;
}
.stack-tabs span {
  width: 113px;
  box-sizing: border-box;
  padding: 4px 0 0 11px;
  height: 23px;
  border-bottom: 2px solid #3a78c0;
}
.stack-wrap { flex: 1; min-height: 0; display: flex; overflow: hidden; }
.stack-rows { width: 518px; flex: none; padding-top: 3px; }
.stack-row {
  height: 16.56px;
  display: flex;
  align-items: center;
  padding-left: 9px;
  gap: 0;
  white-space: pre;
  color: #8c8c8c;
  font-size: 10.2px;
}
.stack-row em { font-style: italic; color: #b0b0b0; margin-left: 1px; font-size: 11.2px; }
.stack-track { width: 9px; background: #f4f4f4; }
.thumb-c { display: block; width: 9px; height: 260px; background: #e3e3e3; }

.status-bar {
  flex: none;
  height: 17px;
  display: flex;
  align-items: stretch;
  padding-left: 16px;
  border-top: 1px solid #e0e0e0;
  box-sizing: border-box;
}
.bottom-tab {
  display: flex;
  align-items: center;
  gap: 4px;
  padding-left: 5px;
  box-sizing: border-box;
  flex: none;
}
.bottom-tab.active { background: #c4c4c4; }
.event-log { padding-right: 22px; }

.marks { position: absolute; left: 0; top: 0; pointer-events: none; }
.marks rect, .marks path { fill: none; stroke: #e8151b; stroke-width: 1.8; }
.marks .head { fill: #e8151b; stroke: none; }
.watermark {
  position: absolute;
  left: 1330px;
  top: 760px;
  font-size: 17.7px;
  line-height: 20px;
  color: rgba(110, 110, 110, 0.55);
  font-weight: 300;
  pointer-events: none;
  white-space: nowrap;
}
</style>
